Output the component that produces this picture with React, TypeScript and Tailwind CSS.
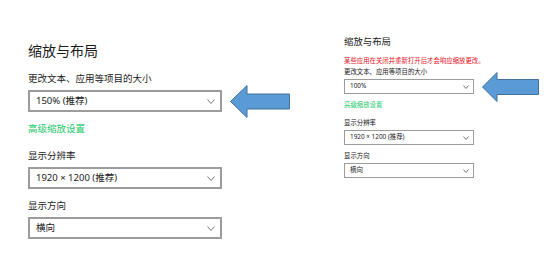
import React from "react";

const font = { fontFamily: '"Noto Sans", "Noto Sans CJK SC", sans-serif' };

// Blue annotation arrow pointing left
function Arrow({ w, h, head, shaftTop, shaftBottom, className }: { w: number; h: number; head: number; shaftTop: number; shaftBottom: number; className?: string }) {
  const mid = h / 2;
  const d = `M0.5 ${mid} L${head} 0.5 L${head} ${shaftTop} L${w - 0.5} ${shaftTop} L${w - 0.5} ${shaftBottom} L${head} ${shaftBottom} L${head} ${h - 0.5} Z`;
  return (
    <svg width={w} height={h} viewBox={`0 0 ${w} ${h}`} className={`shrink-0 ${className ?? ""}`}>
      <path d={d} fill="#5b9bd5" stroke="#41719c" strokeWidth="1" strokeLinejoin="miter" />
    </svg>
  );
}

function Chevron({ w, h }: { w: number; h: number }) {
  return (
    <svg width={w} height={h} viewBox={`0 0 ${w} ${h}`} className="shrink-0">
      <path d={`M0.5 0.5 L${w / 2} ${h - 0.5} L${w - 0.5} 0.5`} fill="none" stroke="#7a7a7a" strokeWidth="1" />
    </svg>
  );
}

function BigSelect({ value }: { value: string }) {
  return (
    <div className="w-[194px] h-[22px] border-2 border-[#9c9c9c] bg-white flex items-center justify-between pl-[6px] pr-[5px]">
      <span className="text-[9.5px] leading-none text-[#1a1a1a]">{value}</span>
      <Chevron w={8} h={5} />
    </div>
  );
}

function SmallSelect({ value }: { value: string }) {
  return (
    <div className="w-[130px] h-[15px] border border-[#9c9c9c] bg-white flex items-center justify-between pl-[5px] pr-[4px]">
      <span className="text-[6.4px] leading-none text-[#1a1a1a]">{value}</span>
      <Chevron w={6} h={4} />
    </div>
  );
}

export default function App() {
  return (
    <div className="w-[558px] h-[258px] bg-white flex gap-[54px] pl-[28px] overflow-hidden" style={font}>
      {/* Before: 150% scale */}
      <div className="w-[262px] flex flex-col pt-[41px]">
        <h2 className="text-[14px] leading-[20px] font-normal text-[#1a1a1a]">缩放与布局</h2>
        <p className="mt-[11px] text-[9.5px] leading-[14px] text-[#1a1a1a]">更改文本、应用等项目的大小</p>
        <div className="mt-[4px] flex items-center gap-[8px]">
          <BigSelect value="150% (推荐)" />
          <Arrow w={60} h={33} head={17} shaftTop={9} shaftBottom={24} className="-my-[5.5px]" />
        </div>
        <p className="mt-[10px] text-[9.5px] leading-[14px] text-[#1cc96b]">高级缩放设置</p>
        <p className="mt-[13px] text-[9.5px] leading-[14px] text-[#1a1a1a]">显示分辨率</p>
        <div className="mt-[4px]">
          <BigSelect value="1920 × 1200 (推荐)" />
        </div>
        <p className="mt-[10px] text-[9.5px] leading-[14px] text-[#1a1a1a]">显示方向</p>
        <div className="mt-[4px]">
          <BigSelect value="横向" />
        </div>
      </div>

      {/* After: 100% scale */}
      <div className="flex flex-col pt-[35px]">
        <h2 className="text-[9.4px] leading-[13px] font-normal text-[#1a1a1a]">缩放与布局</h2>
        <p className="mt-[8px] text-[6.4px] leading-[9px] text-[#e81123]">某些应用在关闭并重新打开后才会响应缩放更改。</p>
        <p className="mt-[2px] text-[6.4px] leading-[9px] text-[#1a1a1a]">更改文本、应用等项目的大小</p>
        <div className="mt-[3px] flex items-center gap-[8px]">
          <SmallSelect value="100%" />
          <Arrow w={57} h={30} head={15} shaftTop={7.5} shaftBottom={22.5} className="-my-[7.5px]" />
        </div>
        <p className="mt-[6px] text-[6.4px] leading-[9px] text-[#1cc96b]">高级缩放设置</p>
        <p className="mt-[9px] text-[6.4px] leading-[9px] text-[#1a1a1a]">显示分辨率</p>
        <div className="mt-[3px]">
          <SmallSelect value="1920 × 1200 (推荐)" />
        </div>
        <p className="mt-[6px] text-[6.4px] leading-[9px] text-[#1a1a1a]">显示方向</p>
        <div className="mt-[3px]">
          <SmallSelect value="横向" />
        </div>
      </div>
    </div>
  );
}
